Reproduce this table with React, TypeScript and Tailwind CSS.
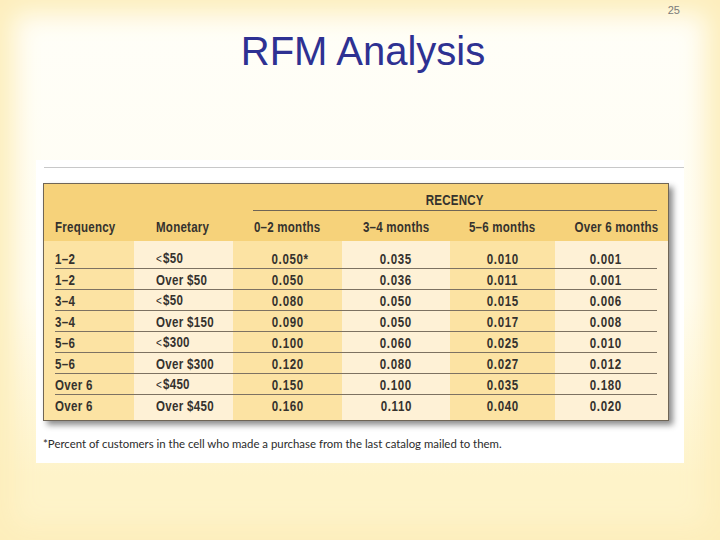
import React from "react";

type Row = {
  freq: string;
  lt: boolean;
  money: string;
  vals: string[];
};

const rows: Row[] = [
  { freq: "1–2", lt: true, money: "$50", vals: ["0.050*", "0.035", "0.010", "0.001"] },
  { freq: "1–2", lt: false, money: "Over $50", vals: ["0.050", "0.036", "0.011", "0.001"] },
  { freq: "3–4", lt: true, money: "$50", vals: ["0.080", "0.050", "0.015", "0.006"] },
  { freq: "3–4", lt: false, money: "Over $150", vals: ["0.090", "0.050", "0.017", "0.008"] },
  { freq: "5–6", lt: true, money: "$300", vals: ["0.100", "0.060", "0.025", "0.010"] },
  { freq: "5–6", lt: false, money: "Over $300", vals: ["0.120", "0.080", "0.027", "0.012"] },
  { freq: "Over 6", lt: true, money: "$450", vals: ["0.150", "0.100", "0.035", "0.180"] },
  { freq: "Over 6", lt: false, money: "Over $450", vals: ["0.160", "0.110", "0.040", "0.020"] }
];

// condensed look: Arial bold squeezed
function N({ children, center = false }: { children: React.ReactNode; center?: boolean }) {
  return (
    <span className={`inline-block whitespace-nowrap scale-x-[0.77] ${center ? "origin-center" : "origin-left"}`}>
      {children}
    </span>
  );
}

export default function App() {
  return (
    <div className="flex h-[540px] w-[720px] flex-col overflow-hidden bg-[linear-gradient(to_bottom,#fffef8_0%,#fffdf2_55%,#fef3c9_88%)] font-['Liberation_Sans',Arial,sans-serif] shadow-[inset_0_0_26px_14px_#fdeebc]">
      <div className="flex justify-end pr-[40px] pt-[3px] text-[11px] leading-[14px] text-[#7a7a7a]">25</div>

      <h1 className="mt-[12px] pl-[6px] text-center text-[40px] leading-[44px] text-[#2e3192]">RFM Analysis</h1>

      {/* figure */}
      <div className="ml-[36px] mt-[87px] h-[303px] w-[648px] bg-white pt-[7px]">
        <div className="ml-[8px] h-px bg-[#c8c8c8]" />

        <div className="ml-[7px] mt-[15px] w-[626px] border border-[#6f6556] text-[15px] font-bold leading-[17px] text-[#35322e] shadow-[4px_4px_6px_rgba(0,0,0,0.45)]">
          {/* header */}
          <div className="bg-[#f6d27a]">
            <div className="grid grid-cols-[90px_99px_424px]">
              <div />
              <div />
              <div className="ml-[20px] flex h-[27px] items-end justify-center border-b border-[#6f6556] pb-[2px] tracking-[0.3px]">
                <N center>RECENCY</N>
              </div>
            </div>
            <div className="grid h-[30px] grid-cols-[90px_99px_109px_108px_105px_113px] items-center tracking-[0.3px]">
              <div className="pl-[11px]"><N>Frequency</N></div>
              <div className="pl-[22px]"><N>Monetary</N></div>
              <div className="text-center"><N center>0–2 months</N></div>
              <div className="text-center"><N center>3–4 months</N></div>
              <div className="text-center"><N center>5–6 months</N></div>
              <div className="pl-[7px] text-center"><N center>Over 6 months</N></div>
            </div>
          </div>

          {/* body */}
          <div className="bg-[linear-gradient(to_right,#fce3a3_0_90px,#fef1d6_90px_189px,#fce3a3_189px_298px,#fef1d6_298px_406px,#fce3a3_406px_511px,#fef1d6_511px)] px-[11px] pb-[4px] pt-[7px]">
            {rows.map((r, i) => (
              <div
                key={i}
                className={`grid h-[21px] grid-cols-[79px_99px_109px_108px_105px_102px] items-center ${i < rows.length - 1 ? "border-b border-[#7d7262]" : ""}`}
              >
                <div className="tracking-[0.4px]"><N>{r.freq}</N></div>
                <div className="pl-[22px] tracking-[0.4px]">
                  <N>
                    {r.lt && <span className="mr-px text-[13px] font-normal">&lt;</span>}
                    {r.money}
                  </N>
                </div>
                {r.vals.map((v, j) => (
                  <div key={j} className={`text-center tracking-[0.8px] ${j === 0 && v.endsWith("*") ? "pl-[6px]" : ""}`}>
                    <N center>{v}</N>
                  </div>
                ))}
              </div>
            ))}
          </div>
        </div>

        <p className="ml-[7px] mt-[16px] font-['Lato',sans-serif] text-[11.4px] leading-[14px] text-[#2b2b2b]">
          *Percent of customers in the cell who made a purchase from the last catalog mailed to them.
        </p>
      </div>
    </div>
  );
}
